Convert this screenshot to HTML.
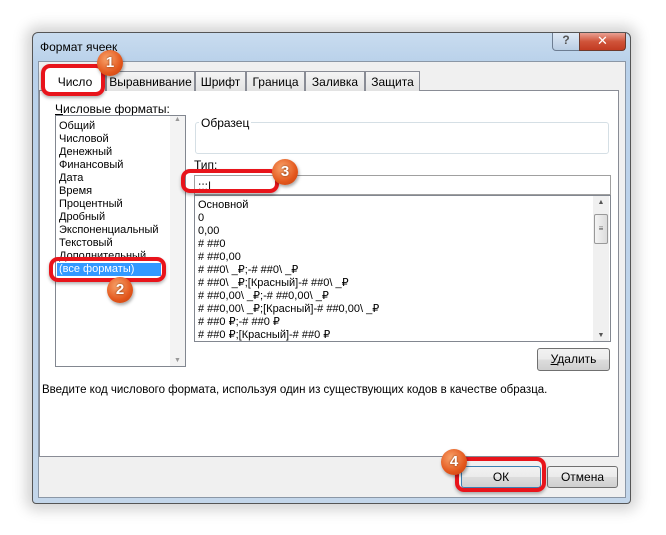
<!DOCTYPE html>
<html><head><meta charset="utf-8"><style>
*{box-sizing:border-box;margin:0;padding:0}
body{width:666px;height:535px;background:#fff;position:relative;overflow:hidden;font-family:"Liberation Sans","DejaVu Sans",sans-serif;font-size:11px;color:#000}
.a{position:absolute}
.frame{left:32px;top:32px;width:599px;height:472px;border:1px solid #555;border-radius:6px 6px 4px 4px;background:linear-gradient(180deg,#c9dcef 0,#b9d1ea 30px,#c3d6ea 100%);box-shadow:0 0 14px 6px rgba(0,0,0,.18)}
.client{left:38px;top:61px;width:588px;height:437px;background:#f0f0f0;border:1px solid #8b97a6}
.panel{left:39px;top:90px;width:580px;height:367px;background:#fff;border:1px solid #898c95}
.tab{top:71px;height:20px;border:1px solid #898c95;border-bottom:none;background:linear-gradient(#f4f4f4,#e3e3e3);padding:3px 0 0 0;text-align:center;font-size:12px}
.btn{border:1px solid #707070;border-radius:3px;background:linear-gradient(#f2f2f2 0,#ebebeb 50%,#dddddd 51%,#cfcfcf 100%);text-align:center;font-size:12px;padding-top:3px}
.li{position:absolute;left:3px;font-size:11px;line-height:13px;white-space:nowrap}
.red{position:absolute;border:4px solid #e8141b;border-radius:9px;box-shadow:0 2px 3px rgba(0,0,0,.3)}
.num{position:absolute;width:26px;height:26px;border-radius:50%;background:radial-gradient(circle at 40% 35%,#f9a66e,#e3571c 60%,#c23f10);color:#fff;font-weight:bold;font-size:15px;text-align:center;line-height:26px;text-shadow:0 0 2px #7a2a00;box-shadow:1px 2px 3px rgba(0,0,0,.35)}
</style></head><body>
<div class="a frame"></div>
<div class="a" style="left:40px;top:40px;font-size:12px">Формат ячеек</div>
<div class="a" style="left:552px;top:33px;width:28px;height:18px;border:1px solid #6d7d92;border-top:none;border-radius:0 0 0 4px;background:linear-gradient(#dfe9f5,#b9cde3);text-align:center;color:#555;font-weight:bold;font-size:12px">?</div>
<div class="a" style="left:579px;top:33px;width:47px;height:18px;border:1px solid #6d3a2d;border-top:none;border-radius:0 0 4px 0;background:linear-gradient(#e9a193,#d0543a 50%,#c23b22);text-align:center;color:#fff;font-weight:bold;font-size:13px">✕</div>
<div class="a client"></div>
<div class="a panel"></div>
<div class="a tab" style="left:44px;top:67px;width:62px;height:24px;background:#fff;padding-top:7px">Число</div>
<div class="a tab" style="left:106px;width:89px">Выравнивание</div>
<div class="a tab" style="left:195px;width:51px">Шрифт</div>
<div class="a tab" style="left:246px;width:59px">Граница</div>
<div class="a tab" style="left:305px;width:60px">Заливка</div>
<div class="a tab" style="left:365px;width:55px">Защита</div>
<div class="a" style="left:55px;top:102px;font-size:12px"><u>Ч</u>исловые форматы:</div>
<div class="a" style="left:55px;top:115px;width:131px;height:252px;border:1px solid #828790;background:#fff;overflow:hidden">
<div class="li" style="top:4px">Общий</div><div class="li" style="top:17px">Числовой</div><div class="li" style="top:30px">Денежный</div><div class="li" style="top:43px">Финансовый</div><div class="li" style="top:56px">Дата</div><div class="li" style="top:69px">Время</div><div class="li" style="top:82px">Процентный</div><div class="li" style="top:95px">Дробный</div><div class="li" style="top:108px">Экспоненциальный</div><div class="li" style="top:121px">Текстовый</div><div class="li" style="top:134px">Дополнительный</div>
<div style="position:absolute;left:1px;top:147px;width:104px;height:13px;background:#3399ff"></div><div class="li" style="top:147px;color:#fff">(все форматы)</div>
<div style="position:absolute;right:0;top:0;width:15px;height:250px;background:#f3f3f3;color:#999;font-size:7px;text-align:center">▲<div style="position:absolute;bottom:2px;width:15px">▼</div></div>
</div>
<div class="a" style="left:195px;top:122px;width:414px;height:32px;border:1px solid #d5dfe5;border-radius:3px"></div>
<div class="a" style="left:199px;top:116px;background:#fff;padding:0 2px;font-size:12px">Образец</div>
<div class="a" style="left:194px;top:158px;font-size:12px">Тип:</div>
<div class="a" style="left:194px;top:175px;width:417px;height:20px;border:1px solid #a0a0a0;background:#fff;padding:3px 0 0 3px;font-size:12px">;;;|</div>
<div class="a" style="left:194px;top:195px;width:417px;height:147px;border:1px solid #828790;background:#fff;overflow:hidden">
<div class="li" style="top:3px">Основной</div><div class="li" style="top:16px">0</div><div class="li" style="top:29px">0,00</div><div class="li" style="top:42px"># ##0</div><div class="li" style="top:55px"># ##0,00</div><div class="li" style="top:68px"># ##0\ _₽;-# ##0\ _₽</div><div class="li" style="top:81px"># ##0\ _₽;[Красный]-# ##0\ _₽</div><div class="li" style="top:94px"># ##0,00\ _₽;-# ##0,00\ _₽</div><div class="li" style="top:107px"># ##0,00\ _₽;[Красный]-# ##0,00\ _₽</div><div class="li" style="top:120px"># ##0 ₽;-# ##0 ₽</div><div class="li" style="top:133px"># ##0 ₽;[Красный]-# ##0 ₽</div>
<div style="position:absolute;right:1px;top:0;width:16px;height:145px;background:#f0f0f0;color:#555;font-size:7px;text-align:center;padding-top:3px">▲<div style="position:absolute;left:1px;top:18px;width:14px;height:30px;border:1px solid #999;border-radius:2px;background:linear-gradient(90deg,#f4f4f4,#dcdcdc);font-size:8px;line-height:28px">≡</div><div style="position:absolute;bottom:2px;width:16px">▼</div></div>
</div>
<div class="a btn" style="left:537px;top:348px;width:73px;height:23px"><u>У</u>далить</div>
<div class="a" style="left:42px;top:384px;font-size:11.5px">Введите код числового формата, используя один из существующих кодов в качестве образца.</div>
<div class="a btn" style="left:461px;top:466px;width:80px;height:22px;border-color:#3c7fb1">ОК</div>
<div class="a btn" style="left:547px;top:466px;width:71px;height:22px">Отмена</div>
<div class="red" style="left:41px;top:64px;width:64px;height:32px"></div>
<div class="red" style="left:181px;top:169px;width:98px;height:24px"></div>
<div class="red" style="left:49px;top:257px;width:117px;height:25px"></div>
<div class="red" style="left:455px;top:457px;width:91px;height:35px"></div>
<div class="num" style="left:97px;top:50px">1</div>
<div class="num" style="left:272px;top:159px">3</div>
<div class="num" style="left:107px;top:277px">2</div>
<div class="num" style="left:441px;top:449px">4</div>
</body></html>
